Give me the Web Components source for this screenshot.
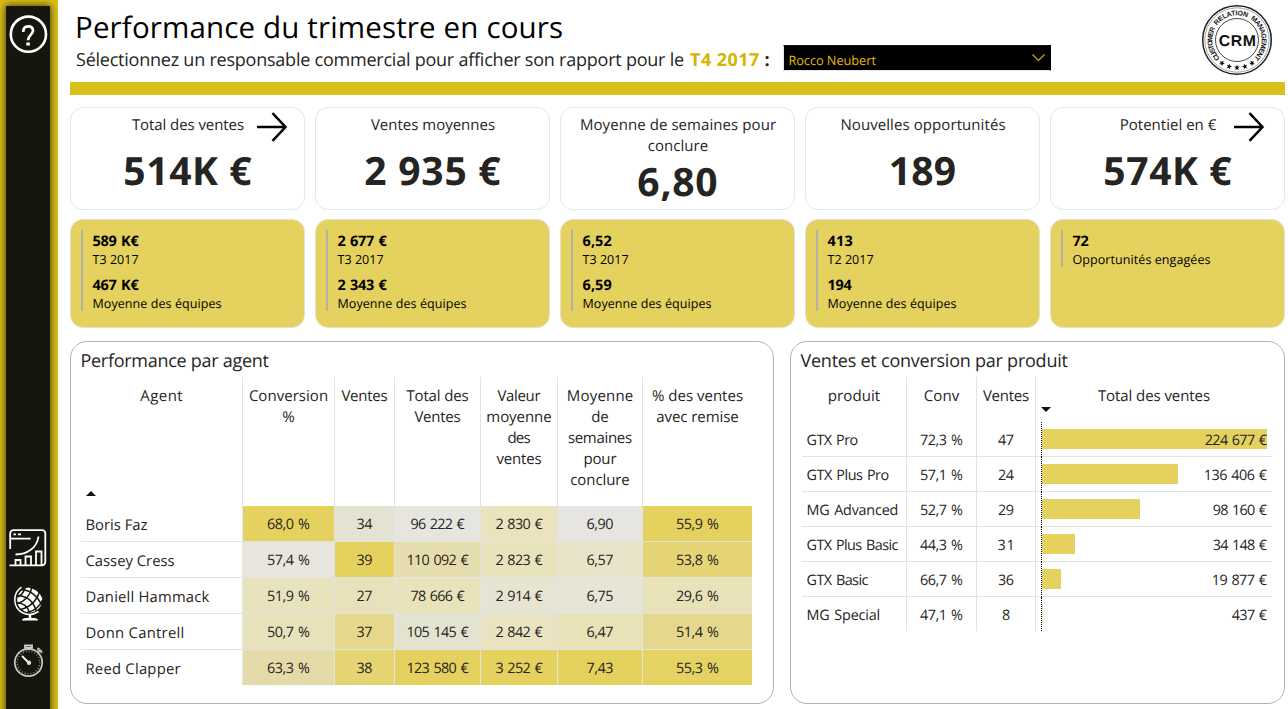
<!DOCTYPE html>
<html lang="fr">
<head>
<meta charset="utf-8">
<title>Performance du trimestre en cours</title>
<style>
html,body{margin:0;height:709px;overflow:hidden;background:#fff}
body{font-family:"Open Sans","Noto Sans",sans-serif;color:#252423;text-rendering:geometricPrecision}
</style>
</head>
<body>
<crm-dashboard></crm-dashboard>
<script>
const define = (name, html, init) => customElements.define(name, class extends HTMLElement {
  connectedCallback() {
    if (this.shadowRoot) return;
    const t = document.createElement('template');
    t.innerHTML = typeof html === 'function' ? html(this) : html;
    this.attachShadow({mode: 'open'}).append(t.content.cloneNode(true));
    if (init) init(this);
  }
});

/* Single line of text whose tracking is adjusted so its ink spans the width in `w`. */
const ctx = document.createElement('canvas').getContext('2d');
ctx.textRendering = 'geometricPrecision';
define('fit-text', `<style>:host{display:inline-block;white-space:pre}</style><slot></slot>`, el => {
  const w = +el.getAttribute('w'), s = el.textContent, cs = getComputedStyle(el);
  if (!w || s.length < 2) return;
  ctx.font = `${cs.fontWeight} ${cs.fontSize} ${cs.fontFamily}`;
  const m = ctx.measureText(s);
  const gaps = (s.split(' ').length - 1) * (parseFloat(cs.wordSpacing) || 0);
  const ls = (w - gaps - m.actualBoundingBoxRight - m.actualBoundingBoxLeft) / (s.length - 1);
  el.style.letterSpacing = ls.toFixed(3) + 'px';
  el.style.marginRight = (-ls).toFixed(3) + 'px';
});

define('nav-rail', `<style>
:host{display:block;width:58px;height:709px;box-sizing:border-box;padding:6px 8px 0 6px;background:#dbbf1a;overflow:hidden}
nav{height:720px;box-sizing:border-box;background:#16160f;box-shadow:0 0 7px 1px rgba(30,28,0,.75);display:flex;flex-direction:column;align-items:center}
svg{display:block;flex:none;fill:none;stroke:#fff}
.help{margin-top:8px}.chart{margin-top:475px}.globe{margin-top:19px}.watch{margin-top:20px}
</style>
<nav>
<svg class="help" width="40" height="40" viewBox="0 0 40 40"><circle cx="20.4" cy="20.2" r="17.6" stroke-width="2.6"/><path d="M15.200 18C15.200 14.200 17 12.300 20.200 12.300C23.200 12.300 25 14 25 16.800C25 20.500 20.100 21 20.100 26.300" stroke-width="2.700"/><rect x="18.300" y="28.500" width="3.600" height="3" fill="#fff" stroke="none"/></svg>
<svg class="chart" width="38" height="38" viewBox="0 0 38 38" stroke-width="1.800"><path d="M1.200 20V4.500a3.300 3.300 0 0 1 3.300-3.300H33a3.300 3.300 0 0 1 3.300 3.300V33a3.300 3.300 0 0 1-3.300 3.300H.5M1.200 9.700h20.500M6.500 25.500C18 25.500 28 19 29.500 7.500M6.500 36v-5h5v5M16.500 36v-8.500h5.500V36M27 36V22.500h5.500V36"/><path d="M4.500 5.400h2.600M9 5.400h3" stroke-width="1.900"/></svg>
<svg class="globe" width="32" height="36" viewBox="0 0 32 36"><circle cx="17.700" cy="14" r="12.500" fill="#fff" stroke="none"/><g stroke="#16160f" stroke-width="1.500"><path d="M9 3.500C18 4 26 10 29.500 19M5.500 9.500C15 10 22 16 24.500 26M5 17C11 17 16 20.500 18 27.500M17 1c6 1 11 4.500 13.500 10"/><path d="M27.500 5C25.500 14 18 21.500 8.500 23.500M20 1C18.500 9 13 15.500 5 17.500M30.500 14C28 20 22 25 15 26.500M13 1.500C12 6 9 9.500 5.500 11"/></g><path d="M9.500 1.200A15 15 0 0 0 10 26.500Q18 31 26.500 25.500" stroke-width="1.500"/><path d="M18 28v4" stroke-width="2.600"/><path d="M10 34.500q0-2.500 4-2.500h8q4 0 4 2.500z" fill="#fff" stroke="none"/></svg>
<svg class="watch" width="34" height="36" viewBox="0 0 34 36" stroke="#c9c9c7"><circle cx="17.500" cy="20.500" r="13.700" stroke="#c9c9c7" stroke-width="1.700"/><circle cx="17.500" cy="20.500" r="11.300" stroke-width="1.500" stroke-dasharray=".8 2.150" stroke="#aaa"/><path d="M14 3.500h7v2.300h-7zM17.500 5.500V8" stroke="#ccc" stroke-width="1.800"/><path d="m27 10 1.800-1.800m-2.300-2 4.500 4.300" stroke-width="2.500" stroke="#b5b5b5"/><path d="m11 14 6 6" stroke-width="1.800"/><circle cx="18" cy="20.800" r="2.200" fill="#ddd" stroke="none"/></svg>
</nav>`);

define('crm-logo', () => {
  const star = [-33,-16.5,0,16.5,33].map(a => `<path transform="rotate(${a} 36 36) translate(36 63.5)" d="M0-2.800.8-.9 2.800-.8 1.200.6 1.800 2.700 0 1.500-1.800 2.700-1.200.6-2.800-.8-.8-.9z"/>`).join('');
  const word = (s, a, b, id) => {
    const r = 24.7, p = d => { const t = d * Math.PI / 180; return (36 + r * Math.sin(t)).toFixed(2) + ' ' + (36 - r * Math.cos(t)).toFixed(2); };
    const len = r * (b - a) * Math.PI / 180;
    return `<path id="${id}" fill="none" d="M${p(a)}A${r} ${r} 0 0 1 ${p(b + 12)}"/><text font-size="7"><textPath href="#${id}" textLength="${len.toFixed(1)}">${s}</textPath></text>`;
  };
  return `<style>:host{display:block;width:72px;height:72px}svg{display:block;overflow:visible}text{font-family:"Liberation Sans",sans-serif;font-weight:700;fill:#111}</style>
<svg width="72" height="72" viewBox="0 0 72 72"><g fill="none" stroke="#222"><circle cx="36" cy="36" r="34.300" stroke-width="1.500"/><circle cx="36" cy="36" r="32.200" stroke-width=".6" stroke="#666"/><circle cx="36" cy="36" r="21.500" stroke-width=".9" stroke="#333"/></g>
${word('CUSTOMER', -137, -62, 'a')}${word('RELATION', -54, 24, 'b')}${word('MANAGEMENT', 33, 137, 'c')}
<text x="36.300" y="41.500" font-size="15.800" text-anchor="middle" textLength="37">CRM</text><g fill="#111">${star}</g></svg>`;
});

define('report-select', `<style>
:host{display:flex;align-items:center;justify-content:space-between;box-sizing:border-box;width:268px;height:26px;border:1px solid #e6e6e6;border-top-color:#111;border-right-color:#000;background:#000;color:#e0b912;font-size:12.800px;padding:3px 4px 0 4px}
svg{margin-top:-3px;fill:none;stroke:#d0ac14;stroke-width:1.200}
</style><slot></slot><svg width="15" height="10" viewBox="0 0 15 10"><path d="m1.500 1.500 6 6 6-6"/></svg>`);

define('report-header', `<style>
:host{display:grid;grid-template-columns:1fr 84px;height:95px;grid-template-rows:82px 13px}
.t{padding-left:6px}
h1{margin:0 0 0 -1px;padding-top:7px;font-size:29.500px;line-height:40px;font-weight:400;color:#000;height:40px}
.s{display:flex;align-items:flex-start;font-size:18px;line-height:24px;height:30px;padding-top:1px}
b{color:#d6b400;margin-left:6px}i{font-style:normal;font-weight:700;margin:0 12px 0 5px;width:7px}
report-select{margin-top:-3px}
.bar{grid-column:1/3;background:#dbc01b}
crm-logo{margin:4px 0 0 0}
</style>
<div class="t"><h1><fit-text w="485">Performance du trimestre en cours</fit-text></h1>
<div class="s"><fit-text w="608">Sélectionnez un responsable commercial pour afficher son rapport pour le</fit-text><b><fit-text w="69">T4 2017</fit-text></b><i>:</i><report-select><fit-text w="87">Rocco Neubert</fit-text></report-select></div></div>
<crm-logo></crm-logo><div class="bar"></div>`);

define('kpi-card', el => {
  const lines = el.getAttribute('label').split('|').map(l => { const [s, w] = l.split('~'); return `<div><fit-text w="${w}">${s}</fit-text></div>`; }).join('');
  const [v, vw] = el.getAttribute('value').split('~');
  const arrow = el.hasAttribute('arrow') ? `<svg width="32" height="32" viewBox="0 0 32 32"><path d="M1 16h28.500M16.500 2.200 29.500 16 16.500 29.800" fill="none" stroke="#000" stroke-width="2.500"/></svg>` : '';
  return `<style>:host{display:block;position:relative;box-sizing:border-box;height:103px;border:1px solid #e6e6e6;border-radius:13px;text-align:center;padding-top:7px;background:#fff}
.l{font-size:15px;line-height:21px;padding-left:1px}.v{font-size:39px;line-height:46px;font-weight:700;margin-top:${lines.includes('conclure') ? 2 : 12}px;white-space:pre}
svg{position:absolute;left:${el.getAttribute('arrow')}px;top:3px}</style><div class="l">${lines}</div><div class="v"><fit-text w="${vw}">${v}</fit-text></div>${arrow}`;
});

define('ref-card', el => {
  const items = el.getAttribute('items').split('|').map(i => { const [a, aw, b, bw] = i.split('~'); return `<div class="i"><b><fit-text w="${aw}">${a}</fit-text></b><span><fit-text w="${bw}">${b}</fit-text></span></div>`; }).join('');
  return `<style>:host{display:block;box-sizing:border-box;height:109px;border:1px solid #e3e0d2;border-radius:13px;background:#e4d15e;padding:10px;color:#000}
.g{border-left:2px solid #b3b0a8;padding:1px 0 0 9.500px;display:grid;gap:7px}
.i{display:grid;grid-template-rows:20px 17px}.i:last-child{height:36px}b{font-size:14.500px;line-height:22px;word-spacing:1px}span{font-size:12.500px;line-height:17px}</style><div class="g">${items}</div>`;
});

define('data-panel', `<style>
:host{display:block;box-sizing:border-box;height:363px;border:1px solid #b3b3b3;border-radius:17px;padding:6px 0 0 10px}
h2{margin:0 0 3px -.5px;font-size:18px;line-height:26px;height:26px;font-weight:400}</style><h2><slot name="title"></slot></h2><slot></slot>`);

define('agent-table', () => {
  const heads = [['Agent~42'],['Conversion~78','%~12'],['Ventes~46'],['Total des~62','Ventes~46'],['Valeur~43','moyenne~64','des~23','ventes~45'],['Moyenne~65','de~17','semaines~64','pour~32','conclure~59'],['% des ventes~91','avec remise~82']];
  const rows = [
    ['Boris Faz~61','68,0 %~43~e4d15e','34~15.7~e4e2d0','96 222 €~55~e7e5e0','2 830 €~48~eae3bd','6,90~27~e6e5e2','55,9 %~43~e4d15e'],
    ['Cassey Cress~89','57,4 %~43~e7e5de','39~15.7~e4d15e','110 092 €~62~e6ddae','2 823 €~48~e9e3bc','6,57~27~e8e4c9','53,8 %~43~e4d476'],
    ['Daniell Hammack~123','51,9 %~43~e8e2bd','27~15.7~e8e2ba','78 666 €~55~e9e3bb','2 914 €~48~e7e4d1','6,75~27~e7e5d6','29,6 %~43~e8e2b9'],
    ['Donn Cantrell~97','50,7 %~43~e8e2bb','37~15.7~e5d88d','105 145 €~62~e4e3d0','2 842 €~48~e9e3c1','6,47~27~e9e2b8','51,4 %~43~e5d88d'],
    ['Reed Clapper~94','63,3 %~43~e5dba8','38~15.7~e4d472','123 580 €~62~e4d15e','3 252 €~48~e4d15e','7,43~27~e4d15e','55,3 %~43~e4d263']];
  const h = heads.map((c, i) => `<div class="h${i == 6 ? ' e' : ''}">${c.map(x => { const [s, w] = x.split('~'); return `<div><fit-text w="${w}">${s}</fit-text></div>`; }).join('')}${i ? '' : '<svg width="10" height="5"><path d="M0 5 5 0l5 5z" fill="#111"/></svg>'}</div>`).join('');
  const b = rows.map((r, ri) => r.map((x, i) => { const [s, w, c] = x.split('~'); return `<div class="${i ? 'c' : 'n'}${ri == 4 ? ' z' : ''}${i == 6 ? ' e' : ''}"${c ? ` style="background-color:#${c}"` : ''}><fit-text w="${w}">${s}</fit-text></div>`; }).join('')).join('');
  return `<style>:host{display:grid;width:671px;grid-template-columns:162px 92px 60px 86px 77px 85px 109px;grid-template-rows:129px repeat(4,36px) 35px;font-size:14.400px}
div{box-sizing:border-box}
.h{border-right:1px solid #e3e3e3;padding-top:9px;line-height:21px;text-align:center;display:flex;flex-direction:column;font-size:15px}
.h svg{margin:auto 0 10px 5px}
.n{padding:2px 0 0 4.500px;line-height:34px;border-bottom:1px solid #e3e3e3;border-right:1px solid #e8e8e8;font-size:14.800px;height:100%}
.c{text-align:center;line-height:35px;padding-top:1px;border-bottom:1px solid #e3e3e3;border-right:1px solid #e3e3e3;overflow:hidden;word-spacing:1.200px}
.z{border-bottom:0}.e{border-right:0}</style>${h}${b}`;
});

define('product-table', () => {
  const rows = [['GTX Pro~51','72,3 %~43','47~15.7','224 677 €~63',226],['GTX Plus Pro~82','57,1 %~43','24~15.7','136 406 €~63',137],['MG Advanced~90','52,7 %~43','29~15.7','98 160 €~55',99],['GTX Plus Basic~92','44,3 %~43','31~15','34 148 €~55',34],['GTX Basic~62','66,7 %~43','36~15.7','19 877 €~55',20],['MG Special~72','47,1 %~43','8~0','437 €~36',1.5]];
  const f = x => { const [s, w] = x.split('~'); return `<fit-text w="${w}">${s}</fit-text>`; };
  const heads = ['produit~51','Conv~36','Ventes~46','Total des ventes~112'];
  return `<style>:host{display:grid;margin-left:1px;width:470px;grid-template-columns:105px 70px 59px 236px;grid-template-rows:45px repeat(5,35px) 34px;font-size:14.400px}
div{box-sizing:border-box}
.h,.c{text-align:center;border-right:1px solid #e3e3e3}.h{padding-top:9px;line-height:21px;font-size:15px}
.h.e{border-right:0;display:grid;justify-items:center;grid-template-rows:21px}.h svg{justify-self:start;margin:0 0 0 5px;display:block}
.c{line-height:35px;padding-top:1px;border-bottom:1px solid #e3e3e3;word-spacing:1.200px;overflow:hidden}.c.n{text-align:left;padding-left:4.500px}
.c.b{border-right:0;padding:0 0 0 5px;overflow:visible}
.t{height:35px;border-left:1px dotted #000;line-height:35px;text-align:right;padding:1px 5px 0 0;background:linear-gradient(#e4d15e,#e4d15e) 0 7px/calc(var(--w) - 1px) 20px no-repeat}
.z{border-bottom:0}.z .t{height:34px}</style>
${heads.map((x, i) => `<div class="h${i == 3 ? ' e' : ''}">${f(x)}${i == 3 ? '<svg width="10" height="5"><path d="M0 0h10L5 5z" fill="#111"/></svg>' : ''}</div>`).join('')}
${rows.map((r, i) => { const z = i == 5 ? ' z' : ''; return `<div class="c n${z}">${f(r[0])}</div><div class="c${z}">${f(r[1])}</div><div class="c${z}">${f(r[2])}</div><div class="c b${z}"><div class="t" style="--w:${r[4]}px">${f(r[3])}</div></div>`; }).join('')}`;
});

define('crm-dashboard', `<style>
:host{display:grid;grid-template-columns:58px 1215px;column-gap:12px;height:709px}
.k,.r{display:grid;grid-template-columns:repeat(5,235px);gap:10px}
.k{margin-top:12px}.r{margin-top:9px}
.p{display:grid;grid-template-columns:704px 495px;gap:16px;margin-top:13px}
</style>
<nav-rail></nav-rail>
<main><report-header></report-header>
<div class="k">
<kpi-card label="Total des ventes~112" value="514K €~127" arrow="185"></kpi-card>
<kpi-card label="Ventes moyennes~124" value="2 935 €~135"></kpi-card>
<kpi-card label="Moyenne de semaines pour~195|conclure~60" value="6,80~78"></kpi-card>
<kpi-card label="Nouvelles opportunités~164" value="189~64"></kpi-card>
<kpi-card label="Potentiel en €~96" value="574K €~127" arrow="182"></kpi-card>
</div>
<div class="r">
<ref-card items="589 K€~47~T3 2017~46|467 K€~47~Moyenne des équipes~128"></ref-card>
<ref-card items="2 677 €~50~T3 2017~46|2 343 €~50~Moyenne des équipes~128"></ref-card>
<ref-card items="6,52~29~T3 2017~46|6,59~29~Moyenne des équipes~128"></ref-card>
<ref-card items="413~25~T2 2017~46|194~25~Moyenne des équipes~128"></ref-card>
<ref-card items="72~16~Opportunités engagées~138"></ref-card>
</div>
<div class="p">
<data-panel><fit-text slot="title" w="187">Performance par agent</fit-text><agent-table></agent-table></data-panel>
<data-panel><fit-text slot="title" w="267">Ventes et conversion par produit</fit-text><product-table></product-table></data-panel>
</div></main>`);
</script>
</body>
</html>
